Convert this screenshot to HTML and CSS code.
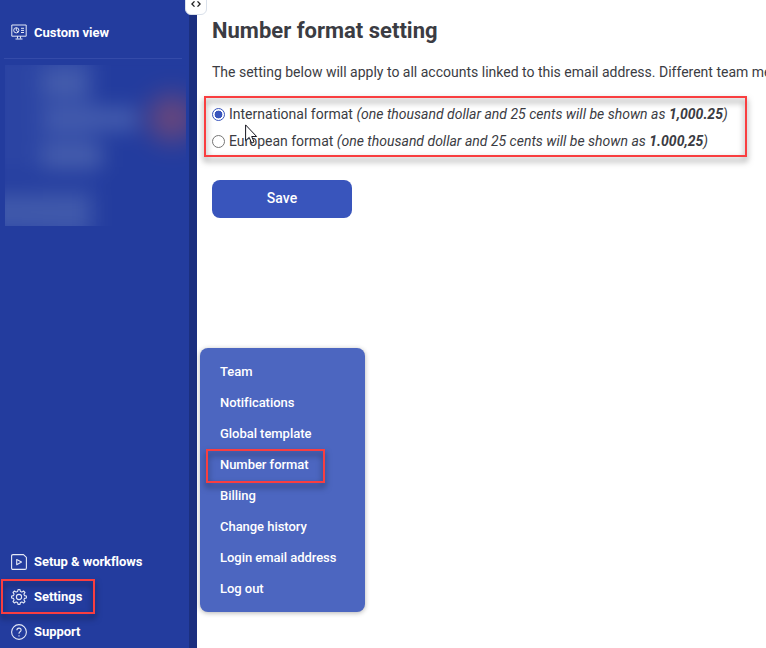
FILE: index.html
```html
<!DOCTYPE html>
<html lang="en">
<head>
<meta charset="utf-8">
<title>Number format setting</title>
<link rel="stylesheet" href="styles.css">
</head>
<body>
<div class="app">
  <aside class="sidebar">
    <a class="nav-item nav-top">
      <svg class="icon" viewBox="0 0 16 16"><path d="M.8 1h14.400v11.200H.8zM6.500 12.200v2.300M9.500 12.200v2.300M4.500 15h7"/><circle cx="5.300" cy="6.300" r="2.600"/><path d="M5.300 3.700v2.600l1.800 1.500M10 4.300h3M10 6.400h3M10 8.500h3"/></svg>
      <span>Custom view</span>
    </a>
    <div class="redacted"><div class="smudge"></div></div>
    <nav class="nav-bottom">
      <a class="nav-item">
        <svg class="icon" viewBox="0 0 16 16"><path d="M2 .6h10.500L15.400 3.300V14q0 1.400-1.400 1.400H2Q.6 15.400.6 14V2Q.6.600 2 .6z"/><path d="M5.700 5.500v5.200l4.800-2.600z"/></svg>
        <span>Setup &amp; workflows</span>
      </a>
      <a class="nav-item marked">
        <svg class="icon" viewBox="0 0 16 16"><path d="M6.600 2.400 7 .6h2l.4 1.800 1.500.7 1.600-1.100 1.500 1.500-1.100 1.600.6 1.500 1.900.4v2l-1.900.4-.6 1.500 1.100 1.600-1.500 1.500-1.600-1.100-1.500.7-.4 1.800H7l-.4-1.800-1.500-.7L3.500 14 2 12.500l1.100-1.600-.6-1.500L.6 9V7l1.900-.4.600-1.500L2 3.500 3.500 2l1.600 1.100z"/><circle cx="8" cy="8" r="2.600"/></svg>
        <span>Settings</span>
        <i class="highlight highlight-settings"></i>
      </a>
      <a class="nav-item">
        <svg class="icon" viewBox="0 0 16 16"><circle cx="8" cy="8" r="7.400"/><path d="M5.900 6.300q0-2.200 2.100-2.200t2.100 2q0 1-1.100 1.700-1 .7-1 1.700v.3M8 11.300v1.200"/></svg>
        <span>Support</span>
      </a>
    </nav>
    <button class="collapse" aria-label="Toggle sidebar"><svg viewBox="0 0 10 6"><path d="M3.500.4.900 3l2.600 2.600M6.500.4 9.100 3 6.500 5.600"/></svg></button>
  </aside>
  <main class="content">
    <h1>Number format setting</h1>
    <p class="intro">The setting below will apply to all accounts linked to this email address. Different team members</p>
    <div class="options marked">
      <label class="option"><input type="radio" name="format" checked><span>International format <em>(one thousand dollar and 25 cents will be shown as <b>1,000.25</b>)</em></span></label>
      <label class="option"><input type="radio" name="format"><span>European format <em>(one thousand dollar and 25 cents will be shown as <b>1.000,25</b>)</em></span></label>
      <i class="highlight highlight-options"></i>
    </div>
    <button class="save">Save</button>
  </main>
  <div class="menu">
    <a>Team</a>
    <a>Notifications</a>
    <a>Global template</a>
    <a class="marked">Number format<i class="highlight highlight-menu"></i></a>
    <a>Billing</a>
    <a>Change history</a>
    <a>Login email address</a>
    <a>Log out</a>
  </div>
  <svg class="cursor" viewBox="0 0 13 20"><path d="M.6.900v15.800l3.600-3.300 2.400 5.700 2.500-1.100-2.400-5.500h4.900z"/></svg>
</div>
</body>
</html>
```

FILE: styles.css
```css
* { box-sizing: border-box; }

body {
  margin: 0;
  font-family: Roboto, "Liberation Sans", sans-serif;
  font-size: 14px;
  color: #3b3c43;
  background: #fff;
}

.app {
  position: relative;
  display: flex;
  height: 648px;
  overflow: hidden;
}

.sidebar {
  position: relative;
  flex: 0 0 197px;
  display: flex;
  flex-direction: column;
  background: #233c9e;
  border-right: 8px solid #1b2f7f;
}

.nav-item {
  display: flex;
  align-items: center;
  gap: 7px;
  height: 35px;
  padding-left: 11px;
  color: #fff;
  font-size: 13px;
  font-weight: 700;
  letter-spacing: -.05px;
  white-space: nowrap;
}

.nav-top {
  height: 59px;
  margin: 0 7px 0 4px;
  padding: 6px 0 0 7px;
  letter-spacing: 0;
  border-bottom: 1px solid #344ba9;
}

.icon {
  width: 16px;
  height: 16px;
  fill: none;
  stroke: #e4e8f6;
  stroke-width: 1.1;
  stroke-linejoin: round;
}

.nav-top .icon { stroke-width: 1; }

.redacted {
  width: 181px;
  height: 161px;
  margin: 6px 0 0 5px;
  overflow: hidden;
}

.smudge {
  height: 211px;
  margin: -20px -60px -30px -20px;
  filter: blur(10px);
  background:
    radial-gradient(ellipse 36px 36px at 187px 73px, #6e4779 15%, #6e477900),
    linear-gradient(#465ead, #465ead) 58px 26px / 44px 24px no-repeat,
    linear-gradient(#435bad, #435bad) 60px 62px / 92px 24px no-repeat,
    linear-gradient(#465ead, #465ead) 58px 100px / 60px 22px no-repeat,
    linear-gradient(#4059ab, #4059ab) 0 150px / 105px 34px no-repeat,
    linear-gradient(#253e9f, #253e9f) 0 126px / 118px 20px no-repeat,
    linear-gradient(90deg, #2b44a3 40px, #314aa6 70px, #314aa6 108px, #233c9e 110px);
}

.nav-bottom { margin-top: auto; transform: translateY(1px); }

.marked { position: relative; }

.highlight {
  position: absolute;
  border: 2px solid #f93e40;
  filter: drop-shadow(0 4px 3px rgba(0, 0, 0, .55));
  pointer-events: none;
}

.highlight-settings { left: 1px; top: 0; width: 94px; height: 35px; }
.highlight-options { left: -8px; top: -4px; width: 543px; height: 61px; }
.highlight-menu { left: 6px; top: 0; width: 119px; height: 34px; }

.collapse {
  position: absolute;
  left: 185px;
  top: -8px;
  width: 22px;
  height: 23px;
  padding: 1px 0 0;
  display: flex;
  align-items: center;
  justify-content: center;
  border: 1px solid #d9e0ea;
  border-radius: 6px;
  background: #fff;
}

.collapse svg {
  width: 10px;
  height: 6px;
  fill: none;
  stroke: #222;
  stroke-width: 1.3;
}

.content {
  flex: 1;
  min-width: 0;
  padding: 16px 0 0 15px;
  white-space: nowrap;
}

h1 {
  margin: 0;
  font-size: 22px;
  line-height: 30px;
  font-weight: 700;
}

.intro { margin: 16px 0 18px; line-height: 20px; }

.options { display: grid; grid-auto-rows: 27px; }

.option { display: flex; align-items: center; gap: 4px; }

.option input {
  width: 13px;
  height: 13px;
  margin: 1px 0 0;
  appearance: none;
  border: 1px solid #767676;
  border-radius: 50%;
  background: #fff;
}

.option input:checked {
  border-color: #3955bc;
  background: radial-gradient(circle, #3955bc 3.6px, #fff 4.2px);
}

.save {
  display: block;
  width: 140px;
  height: 38px;
  margin-top: 26px;
  padding: 0 0 2px;
  border: 0;
  border-radius: 8px;
  background: #3955bc;
  color: #fff;
  font: 500 14px Roboto, "Liberation Sans", sans-serif;
}

.menu {
  position: absolute;
  left: 200px;
  top: 348px;
  width: 165px;
  height: 264px;
  padding: 8px 0;
  border-radius: 8px;
  background: #4c66c0;
  box-shadow: 0 1px 5px rgba(0, 0, 0, .3);
}

.menu a {
  display: block;
  height: 31px;
  padding-left: 20px;
  line-height: 31px;
  font-size: 13px;
  font-weight: 500;
  letter-spacing: -.04px;
  color: #fff;
}

.cursor {
  position: absolute;
  left: 245px;
  top: 124px;
  width: 13px;
  height: 20px;
  fill: #fff;
  stroke: #15151f;
}
```
